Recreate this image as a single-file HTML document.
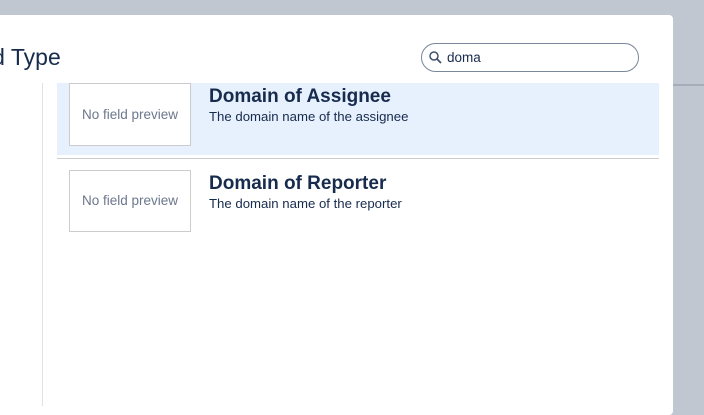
<!DOCTYPE html>
<html><head><style>
body{margin:0;width:704px;height:406px;background:#c1c7d0;position:relative;overflow:hidden;font-family:"Liberation Sans",sans-serif;}
.line{position:absolute;left:660px;top:84px;width:44px;height:2px;background:#a5adba;}
.dlg{position:absolute;left:-10px;top:15px;width:683px;height:400px;background:#fff;border-radius:4px;}
.title{position:absolute;left:-13px;top:44px;font-size:23px;color:#172b4d;}
.search{position:absolute;left:421px;top:43px;width:216px;height:27px;border:1.5px solid #7a869a;border-radius:15px;box-sizing:content-box;}
.search span{position:absolute;left:25px;top:6px;font-size:13.5px;color:#172b4d;}
.vl{position:absolute;left:42px;top:83px;width:1px;height:323px;background:#dfe1e6;}
.row1{position:absolute;left:57px;top:83px;width:602px;height:72px;background:#e7f0fd;}
.sep{position:absolute;left:57px;top:158px;width:602px;height:1px;background:#ccc;}
.box{position:absolute;left:69px;width:120px;background:#fff;border:1px solid #ccc;color:#6b778c;font-size:13.5px;text-align:center;white-space:nowrap;}
.h{position:absolute;left:209px;font-size:19px;font-weight:bold;color:#172b4d;}
.d{position:absolute;left:209px;font-size:13.2px;color:#172b4d;}
</style></head><body>
<div class="line"></div>
<div class="dlg"></div>
<div class="title">ld Type</div>
<div class="search"><svg style="position:absolute;left:7px;top:7px" width="13" height="13" viewBox="0 0 13 13"><circle cx="5" cy="5" r="4" fill="none" stroke="#42526e" stroke-width="1.5"/><path d="M8 8l4 4" stroke="#42526e" stroke-width="1.8"/></svg><span>doma</span></div>
<div class="vl"></div>
<div class="row1"></div>
<div class="sep"></div>
<div class="box" style="top:83px;height:61px;line-height:61px;">No field preview</div>
<div class="h" style="top:86px">Domain of Assignee</div>
<div class="d" style="top:109px">The domain name of the assignee</div>
<div class="box" style="top:170px;height:60px;line-height:60px;">No field preview</div>
<div class="h" style="top:173px">Domain of Reporter</div>
<div class="d" style="top:196px">The domain name of the reporter</div>
</body></html>
